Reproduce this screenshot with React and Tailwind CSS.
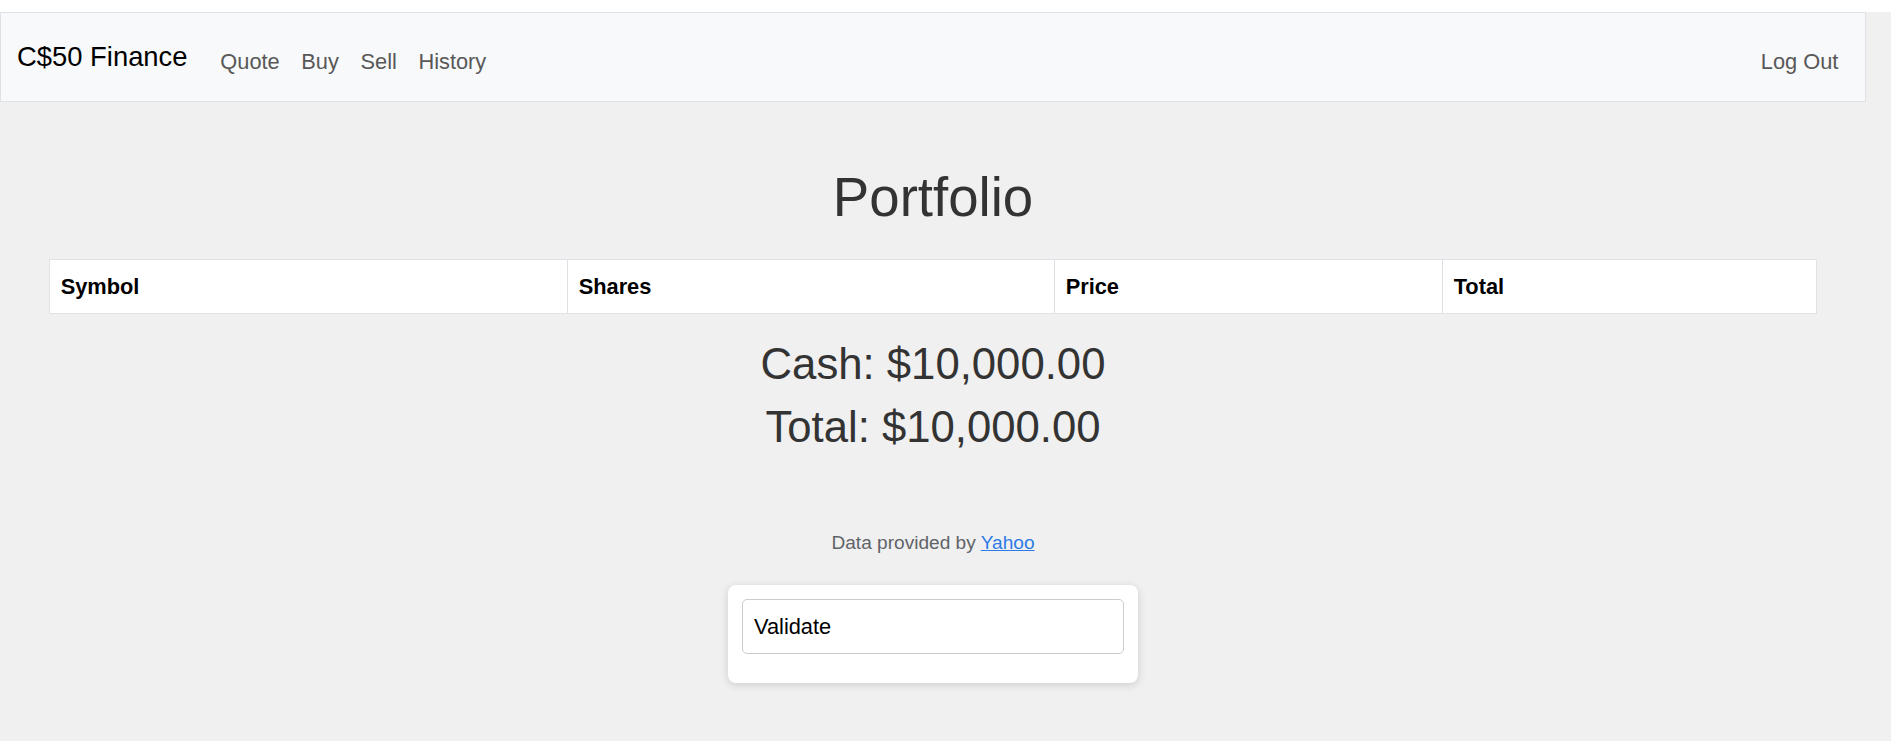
export default function App() {
  const links = ["Quote", "Buy", "Sell", "History"];

  return (
    <div className="min-h-[741px] bg-[#f0f0f0] font-['Liberation_Sans',Arial,sans-serif] text-[#333]">
      <div className="w-[1866px]">
        {/* navbar */}
        <nav className="mt-[12px] flex items-center border border-[#dee2e6] bg-[#f8f9fa] px-[16px] py-[12px]">
          <a className="mr-[22px] py-[4px] text-[27.4px] leading-[1.46] text-black">C$50 Finance</a>
          <ul className="mt-[10.67px] flex">
            {links.map((l) => (
              <li key={l}>
                <a className="block px-[10.8px] py-[10.67px] text-[21.8px] leading-[1.46] text-[#585858]">{l}</a>
              </li>
            ))}
          </ul>
          <ul className="ml-auto mt-[10.67px] flex">
            <li>
              <a className="block px-[10.67px] py-[10.67px] text-[21.8px] leading-[1.46] text-[#585858]">Log Out</a>
            </li>
          </ul>
        </nav>

        <main className="px-[49px] pt-[64px] pb-[64px] text-center">
          <h1 className="mb-[29px] text-[54.6px] leading-[1.17]">Portfolio</h1>
          <table className="mb-[24px] w-full table-fixed border-collapse bg-white text-left text-black">
            <thead>
              <tr>
                <th className="w-[518px] border border-[#dee2e6] px-[10.67px] pt-[11.8px] pb-[9.6px] text-[21.8px] font-bold leading-[1.47]">Symbol</th>
                <th className="w-[487px] border border-[#dee2e6] px-[10.67px] pt-[11.8px] pb-[9.6px] text-[21.8px] font-bold leading-[1.47]">Shares</th>
                <th className="w-[388px] border border-[#dee2e6] px-[10.67px] pt-[11.8px] pb-[9.6px] text-[21.8px] font-bold leading-[1.47]">Price</th>
                <th className="border border-[#dee2e6] px-[10.67px] pt-[11.8px] pb-[9.6px] text-[21.8px] font-bold leading-[1.47]">Total</th>
              </tr>
            </thead>
          </table>
          <h2 className="mb-[12px] text-[43.7px] leading-[1.17]">Cash: $10,000.00</h2>
          <h2 className="mb-[13px] text-[43.7px] leading-[1.17]">Total: $10,000.00</h2>
        </main>

        <footer className="mb-[28px] text-center text-[19.1px] leading-[1.47] text-[#5f6368]">
          Data provided by <a className="text-[#2c7be5] underline">Yahoo</a>
        </footer>

        <div className="mx-auto w-[410px] rounded-lg bg-white px-[14px] pt-[14px] pb-[29px] shadow-[0_2px_8px_rgba(0,0,0,0.15)]">
          <div className="flex h-[55px] items-center rounded-[5px] border border-[#ccc] px-[11px] text-[21.8px] text-black">
            Validate
          </div>
        </div>
      </div>
    </div>
  );
}
